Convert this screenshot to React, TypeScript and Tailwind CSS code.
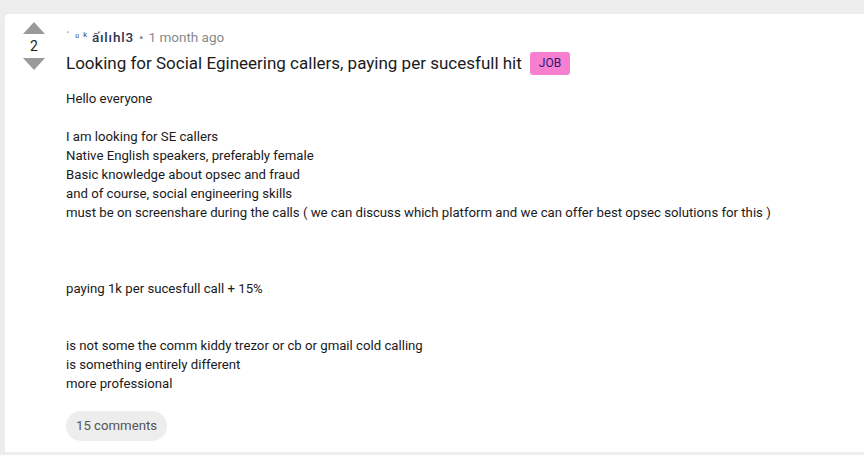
import { useState } from "react";

const bodyLines = [
  "Hello everyone",
  "",
  "I am looking for SE callers",
  "Native English speakers, preferably female",
  "Basic knowledge about opsec and fraud",
  "and of course, social engineering skills",
  "must be on screenshare during the calls ( we can discuss which platform and we can offer best opsec solutions for this )",
  "",
  "",
  "",
  "paying 1k per sucesfull call + 15%",
  "",
  "",
  "is not some the comm kiddy trezor or cb or gmail cold calling",
  "is something entirely different",
  "more professional",
];

export default function App() {
  const [votes] = useState(2);

  return (
    <div
      className="w-[864px] h-[455px] bg-[#ededed] pt-[14px] pl-[5px] overflow-hidden"
      style={{ fontFamily: "Roboto, 'Liberation Sans', sans-serif" }}
    >
      {/* Post card */}
      <div className="bg-white h-[438px] rounded-tl-[4px] flex">
        {/* Vote column */}
        <div className="w-[57px] flex flex-col items-center pt-[8px] pl-[1px]">
          <svg width="22" height="12" viewBox="0 0 22 12">
            <polygon points="11,0 22,12 0,12" fill="#9a9a9a" />
          </svg>
          <span className="text-[14px] leading-[24px] text-[#1a1a1b]">{votes}</span>
          <svg width="22" height="12" viewBox="0 0 22 12">
            <polygon points="0,0 22,0 11,12" fill="#9a9a9a" />
          </svg>
        </div>

        {/* Main content */}
        <div className="flex-1 pl-[4px] pt-[14px]">
          <div className="flex items-center text-[13.5px] leading-[18px] text-[#878a8c]">
            <span className="text-[#2f3550] flex items-end">
              <span className="text-[10px] leading-[10px] mb-[5px]">ˈ</span>
              <span className="text-[10px] ml-[6px]">ᵘ</span>
              <span className="text-[11px] ml-[4px]">ᵏ</span>
              <span className="ml-[5px] font-medium tracking-[0.8px]">ấılıhl3</span>
            </span>
            <span className="mx-[5px]">•</span>
            <span>1 month ago</span>
          </div>

          <div className="flex items-center mt-[4px] h-[26px]">
            <h1 className="text-[17px] leading-[24px] text-[#1a1a1b]">
              Looking for Social Egineering callers, paying per sucesfull hit
            </h1>
            <span className="ml-[8px] bg-[#f77fd0] text-[#2a1a7a] text-[12px] leading-[23px] px-[9px] rounded-[3px]">
              JOB
            </span>
          </div>

          <div className="mt-[13px] text-[13.2px] leading-[19px] text-[#1a1a1b]">
            {bodyLines.map((line, i) => (
              <div key={i} className="h-[19px] whitespace-nowrap">
                {line}
              </div>
            ))}
          </div>

          <div className="mt-[18px]">
            <button className="bg-[#ededed] text-[#555] text-[13.2px] leading-[30px] px-[10px] rounded-full">
              15 comments
            </button>
          </div>
        </div>
      </div>
    </div>
  );
}
